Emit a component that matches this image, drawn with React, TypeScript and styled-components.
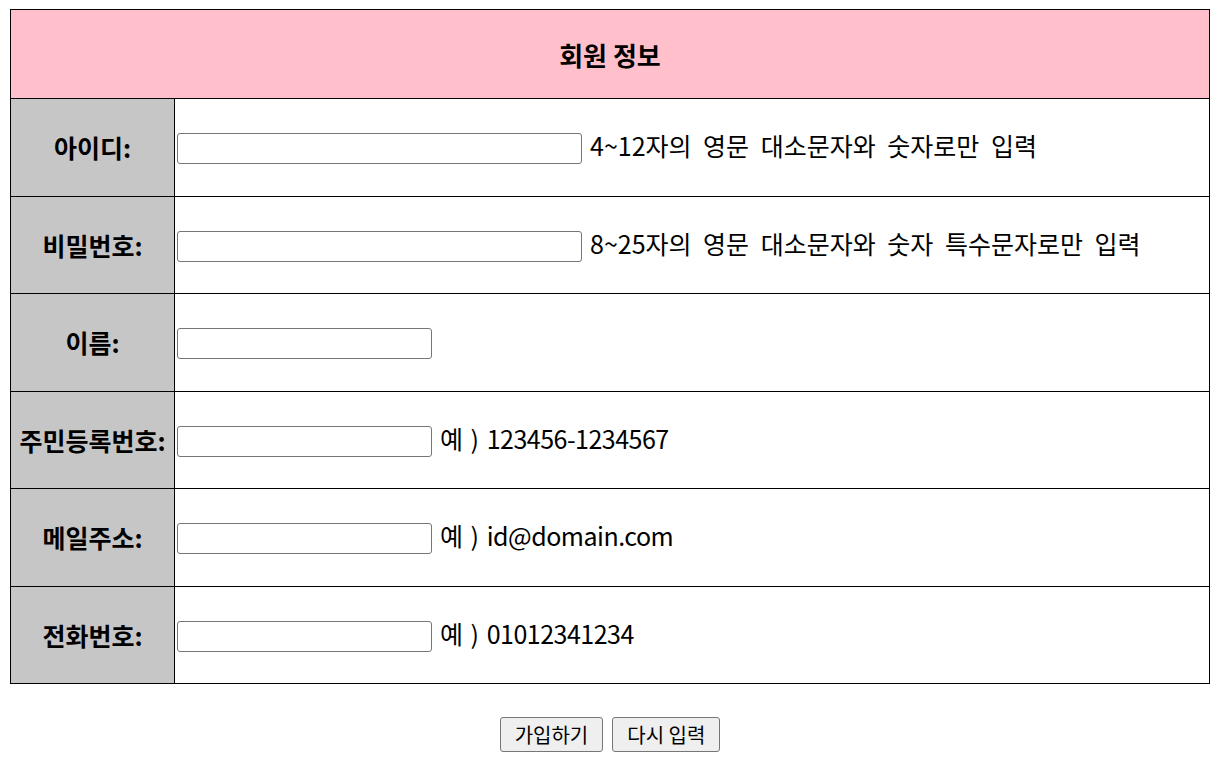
import React from 'react'
import styled, { createGlobalStyle } from 'styled-components'

const GlobalStyle = createGlobalStyle`
  body {
    margin: 0;
    padding: 9px 9px 0 10px;
    background: #ffffff;
    font-family: "Malgun Gothic", "Noto Sans CJK KR", "Noto Sans", sans-serif;
    color: #000000;
  }
`

const Form = styled.form`
  display: flex;
  flex-direction: column;
  align-items: center;
`

const Table = styled.table`
  width: 1200px;
  border-collapse: collapse;
  table-layout: fixed;
`

const LabelCol = styled.col`
  width: 164px;
`

const HeaderCell = styled.th`
  height: 88px;
  padding: 0;
  background: #ffc0cb;
  border: 1px solid #000000;
  font-size: 26px;
  font-weight: 700;
  text-align: center;
`

const LabelCell = styled.th`
  height: 96.5px;
  padding: 0;
  background: #c6c6c6;
  border: 1px solid #000000;
  font-size: 25px;
  font-weight: 700;
  text-align: center;
  white-space: nowrap;
`

const FieldCell = styled.td`
  padding: 3px 2px 0;
  border: 1px solid #000000;
  white-space: nowrap;
`

const Field = styled.div`
  display: flex;
  align-items: center;
  gap: 8px;
`

const TextInput = styled.input<{ $wide?: boolean }>`
  box-sizing: border-box;
  flex-shrink: 0;
  width: ${({ $wide }) => ($wide ? '405px' : '255px')};
  height: 31px;
  margin: 0;
  padding: 1px 2px;
  border: 1px solid #767676;
  border-radius: 3px;
  background: #ffffff;
  font-size: 18px;
`

const Hint = styled.span<{ $example?: boolean }>`
  font-size: 25px;
  line-height: 1;
  word-spacing: ${({ $example }) => ($example ? '2px' : '6px')};
  position: relative;
  top: -3px;
`

const Sample = styled.span`
  letter-spacing: -0.5px;
`

const Buttons = styled.div`
  display: flex;
  gap: 9px;
  margin-top: 33px;
`

const Button = styled.button`
  box-sizing: border-box;
  height: 35px;
  padding: 0 14px;
  border: 1px solid #767676;
  border-radius: 3px;
  background: #efefef;
  color: #000000;
  font-family: "Malgun Gothic", "Noto Sans CJK KR", "Noto Sans", sans-serif;
  font-size: 20px;
`

type Row = { label: string; wide?: boolean; hint?: string; example?: string; type?: string }

const rows: Row[] = [
  { label: '아이디:', wide: true, hint: '4~12자의 영문 대소문자와 숫자로만 입력' },
  { label: '비밀번호:', wide: true, hint: '8~25자의 영문 대소문자와 숫자 특수문자로만 입력', type: 'password' },
  { label: '이름:' },
  { label: '주민등록번호:', example: '123456-1234567' },
  { label: '메일주소:', example: 'id@domain.com' },
  { label: '전화번호:', example: '01012341234' },
]

export default function App() {
  return (
    <>
      <GlobalStyle />
      <Form onSubmit={(e) => e.preventDefault()}>
        <Table>
          <colgroup>
            <LabelCol />
            <col />
          </colgroup>
          <thead>
            <tr>
              <HeaderCell colSpan={2}>회원 정보</HeaderCell>
            </tr>
          </thead>
          <tbody>
            {rows.map((row) => (
              <tr key={row.label}>
                <LabelCell>{row.label}</LabelCell>
                <FieldCell>
                  <Field>
                    <TextInput $wide={row.wide} type={row.type || 'text'} />
                    {row.hint && <Hint>{row.hint}</Hint>}
                    {row.example && (
                      <Hint $example>
                        예 ) <Sample>{row.example}</Sample>
                      </Hint>
                    )}
                  </Field>
                </FieldCell>
              </tr>
            ))}
          </tbody>
        </Table>
        <Buttons>
          <Button type="submit">가입하기</Button>
          <Button type="reset">다시 입력</Button>
        </Buttons>
      </Form>
    </>
  )
}
